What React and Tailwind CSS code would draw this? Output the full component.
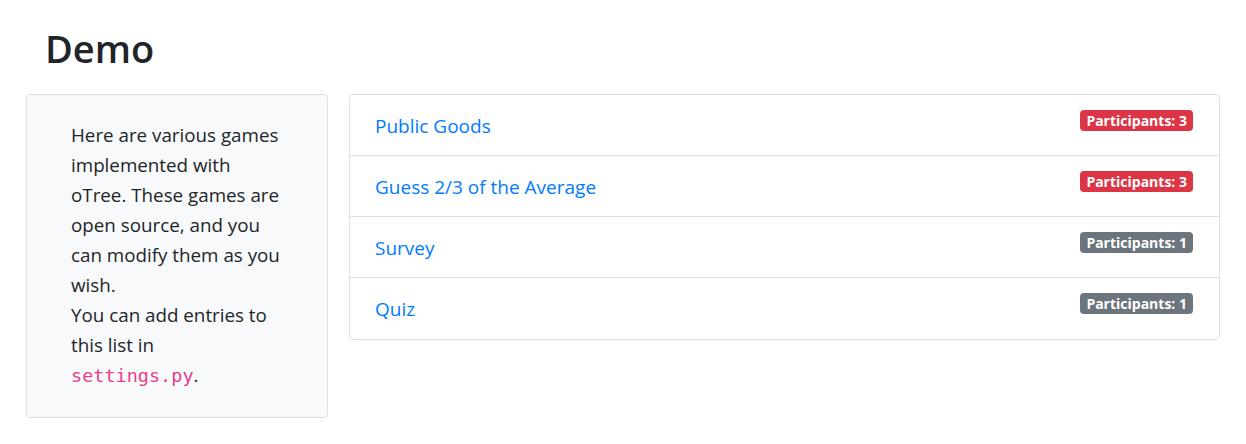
import React from 'react';

const games = [
    { name: 'Public Goods', participants: 3 },
    { name: 'Guess 2/3 of the Average', participants: 3 },
    { name: 'Survey', participants: 1 },
    { name: 'Quiz', participants: 1 },
];

const App = () => {
    return (
        <div
            className="min-h-screen bg-white px-[26px] text-[#212529]"
            style={{ fontFamily: '"Open Sans", "Noto Sans", sans-serif' }}
        >
            {/* Title */}
            <h1 className="pl-[19px] pt-[23px] pb-[20px] text-[38px] font-semibold leading-[51px] text-[#212529]">
                Demo
            </h1>

            <div className="flex items-start gap-[21px]">
                {/* Intro card */}
                <div className="w-[302px] shrink-0 rounded-[4px] border border-[#dfdfdf] bg-[#f8f9fa] pl-[44px] pr-[44px] pt-[25px] pb-[26px] text-[18.8px] leading-[30px]">
                    Here are various games implemented with oTree. These games are open source, and you can modify them as you wish.
                    <br />
                    You can add entries to this list in{' '}
                    <code
                        className="text-[18.5px] text-[#e83e8c]"
                        style={{ fontFamily: '"DejaVu Sans Mono", "Liberation Mono", monospace' }}
                    >
                        settings.py
                    </code>
                    .
                </div>

                {/* Game list */}
                <div className="flex-1 rounded-[4px] border border-[#dfdfdf] bg-white">
                    {games.map((game, i) => (
                        <div
                            key={game.name}
                            className={
                                'flex h-[61px] items-start justify-between pl-[25px] pr-[26px] pt-[15px] ' +
                                (i < games.length - 1 ? 'border-b border-[#dfdfdf]' : '')
                            }
                        >
                            <a href="#" className="mt-[3px] text-[19px] leading-[26px] text-[#007bff]">
                                {game.name}
                            </a>
                            <span
                                className={
                                    'rounded-[4px] px-[6px] py-[2px] text-[14px] font-bold leading-[17px] text-white ' +
                                    (game.participants > 1 ? 'bg-[#dc3545]' : 'bg-[#6c757d]')
                                }
                            >
                                Participants: {game.participants}
                            </span>
                        </div>
                    ))}
                </div>
            </div>
        </div>
    );
};

export default App;
